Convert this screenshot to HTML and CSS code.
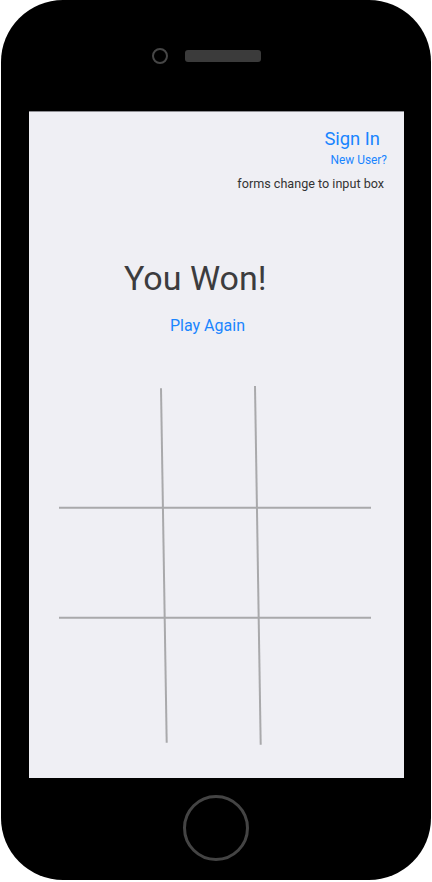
FILE: index.html
```html
<!DOCTYPE html>
<html>
<head>
<meta charset="utf-8">
<link rel="stylesheet" href="styles.css">
</head>
<body>
<div class="phone">
  <div class="phone-top">
    <span class="camera"></span>
    <span class="speaker"></span>
  </div>
  <div class="screen">
    <div class="account">
      <a class="sign-in">Sign In</a>
      <a class="new-user">New User?</a>
      <p class="note">forms change to input box</p>
    </div>
    <h1 class="result">You Won!</h1>
    <a class="play-again">Play Again</a>
    <svg class="board" width="375" height="370" viewBox="0 0 375 370">
      <g stroke="#a9a9ab" stroke-width="2" fill="none">
        <line x1="132" y1="8.3" x2="137.7" y2="362.7"/>
        <line x1="226" y1="6" x2="231.7" y2="364.7"/>
        <line x1="30" y1="127.7" x2="342" y2="127.7"/>
        <line x1="30" y1="237.7" x2="342" y2="237.7"/>
      </g>
    </svg>
  </div>
  <div class="phone-bottom">
    <span class="home"></span>
  </div>
</div>
</body>
</html>
```

FILE: styles.css
```css
html, body {
  margin: 0;
  padding: 0;
  background: #ffffff;
}

body {
  font-family: Roboto, "Liberation Sans", sans-serif;
}

.phone {
  margin-left: 1px;
  width: 430px;
  height: 880px;
  background: #000000;
  border-radius: 62px;
  display: flex;
  flex-direction: column;
  overflow: hidden;
}

.phone-top {
  height: 111px;
  display: flex;
  align-items: center;
  padding-left: 151px;
  box-sizing: border-box;
}

.camera {
  width: 16px;
  height: 16px;
  border: 2px solid #464646;
  border-radius: 50%;
  box-sizing: border-box;
}

.speaker {
  margin-left: 17px;
  width: 76px;
  height: 12px;
  border-radius: 3px;
  background: #3b3b3b;
}

.screen {
  margin-left: 28px;
  width: 375px;
  height: 667px;
  background: #efeff4;
  border-top: 1px solid #8e8e93;
  box-sizing: border-box;
  display: flex;
  flex-direction: column;
  overflow: hidden;
}

.account {
  display: flex;
  flex-direction: column;
  align-items: flex-end;
  padding-top: 16px;
}

.sign-in {
  font-size: 18.4px;
  line-height: 22px;
  color: #1a85ff;
  margin-right: 24px;
}

.new-user {
  font-size: 11.9px;
  line-height: 14px;
  color: #1a85ff;
  margin-top: 3px;
  margin-right: 17px;
}

.note {
  margin: 9px 20px 0 0;
  font-size: 12.6px;
  line-height: 16px;
  color: #333333;
}

.result {
  margin: 66px 0 0 95px;
  font-size: 34px;
  line-height: 40px;
  font-weight: 400;
  color: #3c3c3e;
}

.play-again {
  margin: 18px 0 0 141px;
  font-size: 16px;
  line-height: 20px;
  color: #1a85ff;
}

.board {
  display: block;
  margin-top: 44px;
}

.phone-bottom {
  flex: 1;
  display: flex;
  justify-content: center;
  padding-top: 17px;
  box-sizing: border-box;
}

.home {
  margin-left: -1px;
  width: 66px;
  height: 66px;
  border: 3px solid #444444;
  border-radius: 50%;
  box-sizing: border-box;
}
```
